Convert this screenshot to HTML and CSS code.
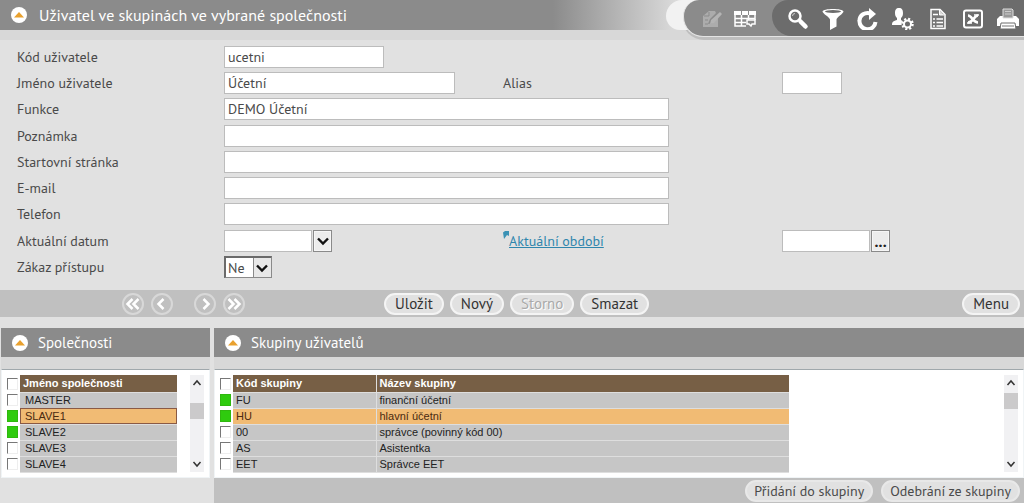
FILE: index.html
```html
<!DOCTYPE html>
<html lang="cs">
<head>
<meta charset="utf-8">
<title>Uživatel ve skupinách ve vybrané společnosti</title>
<link rel="stylesheet" href="styles.css">
</head>
<body>
<svg class="defs" aria-hidden="true">
  <symbol id="collapse" viewBox="0 0 16 16"><circle cx="8" cy="8" r="8" fill="#fff"/><path d="M3 10.500 8 5l5 5.500z" fill="#e9a12f"/></symbol>
  <symbol id="chev" viewBox="0 0 14 14"><path d="m2 4.500 5 5 5-5" fill="none" stroke="#111" stroke-width="2.400"/></symbol>
</svg>

<header class="page-head">
  <button class="toggle" aria-label="Sbalit formulář"><svg><use href="#collapse"/></svg></button>
  <h1 class="title">Uživatel ve skupinách ve vybrané společnosti</h1>
  <nav class="tools" aria-label="Nástroje">
    <div class="tools-bar">
      <div class="tools-minor">
        <button class="tool" aria-label="Upravit" disabled><svg viewBox="0 0 22 22"><path d="M2 8l6-5h6l1 2-6 6-2 5 5-1 5-5v9H2z" fill="#acacac"/><path d="M10 12l9-8 2 2-8 9-4 1z" fill="#b4b4b4"/><path d="M3 8h5V4M4 12h3M4 16h3" fill="none" stroke="#8b8b8b" stroke-width="1"/></svg></button>
        <button class="tool" aria-label="Tabulka"><svg viewBox="0 0 22 22"><path d="M0 3h22v4H0z" fill="#fff"/><path d="M7.500 3v4M14.500 3v4" stroke="#8b8b8b"/><path d="M1 7v11h11M1 10.500h20M1 14.500h11M7.500 7v11M14.500 7v5M21 7v5" fill="none" stroke="#fff" stroke-width="1.500"/><path d="M13 12h8v4h-3l-1 2-2-2h-2z" fill="#8b8b8b" stroke="#fff" stroke-width="1.500"/></svg></button>
      </div>
      <div class="tools-main">
        <button class="tool" aria-label="Hledat"><svg viewBox="0 0 22 22"><circle cx="8" cy="8" r="5.500" fill="none" stroke="#fff" stroke-width="2.500"/><path d="M5.500 8A2.500 2.500 0 0 1 8 5.500" fill="none" stroke="#ccc"/><path d="m13.500 13.500 5 5" stroke="#fff" stroke-width="4.500" stroke-linecap="round"/></svg></button>
        <button class="tool" aria-label="Filtr"><svg viewBox="0 0 22 22"><path d="M.5 3.500C.5 0 21.500 0 21.500 3.500c0 2-7 6-7 8v7L8 22v-10.500c0-2-7.500-6-7.500-8z" fill="#fff"/><ellipse cx="11" cy="3.500" rx="8" ry="1.500" fill="#6c6c6c"/></svg></button>
        <button class="tool" aria-label="Obnovit"><svg viewBox="0 0 22 22"><path d="M14 5.500C8 3.500 2.500 7 2.500 12.500a8 8 0 0 0 16 1.500" fill="none" stroke="#fff" stroke-width="4"/><path d="M12 0l7 6-7 6z" fill="#fff"/></svg></button>
        <button class="tool" aria-label="Nastavení uživatele"><svg viewBox="0 0 22 22"><path d="M7 0c3 0 4 2 4 5S10 9 9 10v2l3 2-1 3H0c0-4 2-4 5-5v-2C4 9 3 8 3 5s1-5 4-5z" fill="#fff"/><circle cx="15.500" cy="16" r="6" fill="#6c6c6c"/><circle cx="15.500" cy="16" r="3.500" fill="none" stroke="#fff" stroke-width="2"/><circle cx="15.500" cy="16" r="5" fill="none" stroke="#fff" stroke-width="2.500" stroke-dasharray="2 1.927"/></svg></button>
        <button class="tool" aria-label="Sestava"><svg viewBox="0 0 22 22"><path d="M4 1.500h9l5 5V20.500H4z" fill="#777" stroke="#fff" stroke-width="1.500"/><path d="M12.500 2v5H17" fill="#ddd" stroke="#fff"/><path d="M6 11h2M9.500 11H16M6 14.500h2M9.500 14.500H16M6 18h2M9.500 18H16M6 6.500h5" stroke="#fff" stroke-width="1.500"/></svg></button>
        <button class="tool" aria-label="Export do Excelu"><svg viewBox="0 0 22 22"><rect x="2" y="2.500" width="18" height="17" rx="2" fill="none" stroke="#fff" stroke-width="2"/><path d="M6 7.500c4 0 5 7 10 7M16 7.500c-4 0-5 7-10 7" fill="none" stroke="#fff" stroke-width="2.600"/><path d="M5 15h5M12 7h5" stroke="#fff" stroke-width="1.500"/></svg></button>
        <button class="tool" aria-label="Tisk"><svg viewBox="0 0 22 22"><path d="M0 11l3-3h16l3 3v7H0z" fill="#fff"/><path d="M6 1h9l1 1v8H6z" fill="#999" stroke="#ddd"/><path d="M8 3.500h6M8 6h6" stroke="#ccc"/><path d="M4 15h14l1 6H3z" fill="#fff" stroke="#6c6c6c"/><path d="M5 18h12" stroke="#777"/></svg></button>
      </div>
    </div>
  </nav>
</header>

<form class="form">
  <div class="group">
    <div class="row"><label for="kod">Kód uživatele</label><input id="kod" class="field w-s" value="ucetni"></div>
    <div class="row"><label for="jmeno">Jméno uživatele</label><input id="jmeno" class="field w-m" value="Účetní"><label for="alias">Alias</label><input id="alias" class="field w-xs"></div>
    <div class="row"><label for="funkce">Funkce</label><input id="funkce" class="field w-l" value="DEMO Účetní"></div>
  </div>
  <div class="group">
    <div class="row"><label for="pozn">Poznámka</label><input id="pozn" class="field w-l"></div>
    <div class="row"><label for="start">Startovní stránka</label><input id="start" class="field w-l"></div>
    <div class="row"><label for="mail">E-mail</label><input id="mail" class="field w-l" type="email"></div>
    <div class="row"><label for="tel">Telefon</label><input id="tel" class="field w-l" type="tel"></div>
  </div>
  <div class="group">
    <div class="row">
      <label for="datum">Aktuální datum</label>
      <div class="combo"><input id="datum" class="field w-d"><button type="button" class="box-btn" aria-label="Vybrat datum"><svg><use href="#chev"/></svg></button></div>
      <div class="link-cell"><svg class="mark" viewBox="0 0 6 8"><path d="M0 1.500 2 0h4v5L4 4 1 8z" fill="#3b92b5"/></svg><a class="link" id="obdobi-link" href="#obdobi">Aktuální období</a></div>
      <div class="combo"><input id="obdobi" class="field w-d" aria-labelledby="obdobi-link"><button type="button" class="box-btn dots" aria-label="Vybrat období">...</button></div>
    </div>
    <div class="row"><label for="zakaz">Zákaz přístupu</label>
      <div class="select-box"><select id="zakaz" class="select"><option>Ne</option><option>Ano</option></select><span class="select-arrow"><svg><use href="#chev"/></svg></span></div>
    </div>
  </div>
</form>

<div class="actions">
  <div class="pager">
    <button class="nav-btn" aria-label="První"><svg viewBox="0 0 22 22"><circle cx="11" cy="11" r="10"/><path d="m10.500 6-5 5 5 5M16.500 6l-5 5 5 5"/></svg></button>
    <button class="nav-btn" aria-label="Předchozí"><svg viewBox="0 0 22 22"><circle cx="11" cy="11" r="10"/><path d="m12.500 6-5 5 5 5"/></svg></button>
    <button class="nav-btn next" aria-label="Další"><svg viewBox="0 0 22 22"><circle cx="11" cy="11" r="10"/><path d="m9.500 6 5 5-5 5"/></svg></button>
    <button class="nav-btn" aria-label="Poslední"><svg viewBox="0 0 22 22"><circle cx="11" cy="11" r="10"/><path d="m5.500 6 5 5-5 5M11.500 6l5 5-5 5"/></svg></button>
  </div>
  <div class="commands">
    <button class="pill">Uložit</button>
    <button class="pill">Nový</button>
    <button class="pill" disabled>Storno</button>
    <button class="pill">Smazat</button>
  </div>
  <button class="pill menu">Menu</button>
</div>

<main class="panels">
  <section class="panel">
    <header class="panel-head"><button class="toggle" aria-label="Sbalit společnosti"><svg><use href="#collapse"/></svg></button><h2 class="title">Společnosti</h2></header>
    <div class="list">
      <table class="grid companies">
        <thead><tr><td class="check"><input type="checkbox" aria-label="Vše"></td><th>Jméno společnosti</th></tr></thead>
        <tbody>
          <tr><td class="check"><input type="checkbox" aria-label="MASTER"></td><td>MASTER</td></tr>
          <tr class="current"><td class="check"><input type="checkbox" checked aria-label="SLAVE1"></td><td>SLAVE1</td></tr>
          <tr><td class="check"><input type="checkbox" checked aria-label="SLAVE2"></td><td>SLAVE2</td></tr>
          <tr><td class="check"><input type="checkbox" aria-label="SLAVE3"></td><td>SLAVE3</td></tr>
          <tr><td class="check"><input type="checkbox" aria-label="SLAVE4"></td><td>SLAVE4</td></tr>
        </tbody>
      </table>
      <div class="scroll" aria-hidden="true"><svg viewBox="0 0 14 14"><path d="m3.500 9 3.500-4 3.500 4"/></svg><span class="thumb low"></span><svg class="down" viewBox="0 0 14 14"><path d="m3.500 5 3.500 4 3.500-4"/></svg></div>
    </div>
  </section>
  <section class="panel">
    <header class="panel-head"><button class="toggle" aria-label="Sbalit skupiny"><svg><use href="#collapse"/></svg></button><h2 class="title">Skupiny uživatelů</h2></header>
    <div class="list">
      <table class="grid groups">
        <thead><tr><td class="check"><input type="checkbox" aria-label="Vše"></td><th class="code">Kód skupiny</th><th>Název skupiny</th></tr></thead>
        <tbody>
          <tr><td class="check"><input type="checkbox" checked aria-label="FU"></td><td>FU</td><td>finanční účetní</td></tr>
          <tr class="current"><td class="check"><input type="checkbox" checked aria-label="HU"></td><td>HU</td><td>hlavní účetní</td></tr>
          <tr><td class="check"><input type="checkbox" aria-label="00"></td><td>00</td><td>správce (povinný kód 00)</td></tr>
          <tr><td class="check"><input type="checkbox" aria-label="AS"></td><td>AS</td><td>Asistentka</td></tr>
          <tr><td class="check"><input type="checkbox" aria-label="EET"></td><td>EET</td><td>Správce EET</td></tr>
        </tbody>
      </table>
      <div class="scroll" aria-hidden="true"><svg viewBox="0 0 14 14"><path d="m3.500 9 3.500-4 3.500 4"/></svg><span class="thumb"></span><svg class="down" viewBox="0 0 14 14"><path d="m3.500 5 3.500 4 3.500-4"/></svg></div>
    </div>
    <footer class="panel-foot"><button class="pill soft">Přidání do skupiny</button><button class="pill soft">Odebrání ze skupiny</button></footer>
  </section>
</main>
</body>
</html>
```
FILE: styles.css
```css
* { box-sizing: border-box; }
body {
  margin: 0;
  min-height: 100vh;
  display: flex;
  flex-direction: column;
  background: #e1e1e1;
  color: #4a4a4a;
  font: 14px/22px "PT Sans", "Noto Sans", sans-serif;
}
button, input, select { font: inherit; color: inherit; margin: 0; padding: 0; border: 0; }
button { background: none; }
.defs { position: absolute; width: 0; height: 0; }

.page-head {
  position: relative;
  display: flex;
  align-items: center;
  gap: 12px;
  height: 40px;
  padding: 0 11px 10px;
  background:
    linear-gradient(#d8d8d8, #d8d8d8) 0 30px / 100% 10px no-repeat,
    linear-gradient(90deg, #8b8b8b 54%, #e1e1e1 67%);
}
.toggle { display: flex; width: 16px; height: 16px; }
.toggle svg { width: 16px; height: 16px; }
.title { margin: 0; color: #fff; font-size: 16px; font-weight: 400; line-height: 28px; }

.tools {
  position: absolute;
  top: 0;
  right: 0;
  height: 40px;
  width: 342px;
  background: linear-gradient(transparent 30px, #bebebe 30px);
  border-bottom-left-radius: 22px;
}
.tools::before {
  content: "";
  position: absolute;
  top: 0;
  left: -16px;
  width: 60px;
  height: 30px;
  background: #f2f2f2;
  border-radius: 16px 0 0 14px;
}
.tools-bar {
  position: relative;
  display: flex;
  height: 37px;
  margin-left: 1px;
  background: #8b8b8b;
  border-bottom: 1px solid #e4e4e4;
  border-left: 1px solid #e4e4e4;
  border-radius: 16px 0 0 20px;
}
.tools-minor { display: flex; align-items: center; gap: 11px; padding: 2px 0 0 17px; width: 88px; }
.tools-main {
  flex: 1;
  display: flex;
  align-items: center;
  justify-content: space-between;
  padding: 2px 5px 0 15px;
  background: #6c6c6c;
  border-radius: 16px 0 0 20px;
}
.tool { display: flex; width: 22px; height: 22px; }
.tool svg { width: 22px; height: 22px; }

.form { display: flex; flex-direction: column; gap: 5px; padding: 6px 0 12px 17px; }
.group { display: flex; flex-direction: column; gap: 4px; }
.row {
  display: grid;
  grid-template-columns: minmax(0, 207fr) minmax(0, 279fr) minmax(0, 279fr) minmax(0, 242fr);
  height: 22px;
}
.field {
  height: 22px;
  padding: 0 3px;
  background: #fff;
  border: 1px solid #bcbcbc;
  outline: 0;
}
.w-xs { width: 60px; }
.w-s { width: 160px; }
.w-m { width: 231px; }
.w-l { width: 445px; }
.w-d { width: 88px; }
.combo { display: flex; gap: 1px; }
.box-btn {
  display: flex;
  align-items: center;
  justify-content: center;
  width: 19px;
  height: 22px;
  background: #ececec;
  border: 1px solid #8a8a8a;
  box-shadow: inset 0 0 0 1px #f6f6f6;
}
.box-btn svg, .select-arrow svg { width: 14px; height: 14px; }
.dots { font-size: 16px; font-weight: 700; color: #222; }
.link-cell { display: flex; align-items: flex-start; }
.mark { width: 6px; height: 8px; margin-top: 1px; }
.link { color: #2f86ad; }
.select-box { position: relative; display: flex; width: 48px; border: 1px solid #8a8a8a; border-top: 2px solid #6a6a6a; border-left: 2px solid #6a6a6a; background: #fff; }
.select { width: 100%; padding-left: 2px; background: none; appearance: none; line-height: 18px; outline: 0; }
.select-arrow {
  position: absolute;
  right: 0;
  top: 0;
  bottom: 0;
  display: flex;
  align-items: center;
  width: 18px;
  padding-left: 1px;
  background: #e8e8e8;
  border-left: 1px solid #8a8a8a;
  pointer-events: none;
}

.actions {
  display: flex;
  align-items: center;
  height: 27px;
  margin-bottom: 11px;
  padding: 0 4px 0 122px;
  background: #c0c0c0;
}
.pager { display: flex; gap: 7px; width: 262px; }
.nav-btn { display: flex; width: 22px; height: 22px; }
.nav-btn.next { margin-left: 14px; }
.nav-btn svg { width: 22px; height: 22px; fill: none; }
.nav-btn circle { stroke: #d8d8d8; stroke-width: 2; }
.nav-btn path { stroke: #fff; stroke-width: 2.5; }
.commands { display: flex; gap: 6px; }
.pill {
  height: 22px;
  padding: 0 9px;
  background: #e1e1e1;
  border: 2px solid #f4f4f4;
  border-radius: 11px;
  color: #333;
  font-size: 15px;
  line-height: 16px;
}
.pill:disabled { color: #aaa; text-shadow: 1px 1px 0 #fff; }
.pill.soft { padding: 0 7px; border-color: #e8e8e8; color: #4a4a4a; font-size: 14px; }
.menu { margin-left: auto; }

.panels { flex: 1; display: grid; grid-template-columns: 209fr 810fr; gap: 4px; padding-left: 1px; }
.panel { display: flex; flex-direction: column; }
.panel-head {
  display: flex;
  align-items: center;
  gap: 10px;
  height: 41px;
  padding: 0 11px 12px;
  background: linear-gradient(#8b8b8b 29px, #d8d8d8 29px);
}
.panel-head .title { font-size: 15px; }
.list {
  display: flex;
  justify-content: space-between;
  height: 109px;
  padding: 5px;
  background: #fff;
  border: 1px solid #f0f4f6;
  border-top-color: #a0a8ac;
}
.grid { border-collapse: collapse; table-layout: fixed; font: 11px/15px "Liberation Sans", Arial, sans-serif; color: #222; align-self: flex-start; }
.companies { width: 170px; }
.groups { width: 569px; }
.grid tr { height: 16px; }
.grid thead tr { height: 17px; }
.grid td, .grid th { padding: 0 0 0 5px; text-align: left; background: #c6c6c6; border-bottom: 1px solid #dedede; line-height: 15px; }
.grid th { padding-left: 3px; background: #775f45; color: #fff; }
.groups .code { width: 143px; }
.groups tr > :nth-child(3) { border-left: 1px solid #dedede; padding-left: 3px; }
.groups tr > :nth-child(2) { padding-left: 3px; }
.grid .current td { background: #f1bb74; color: #4a2a10; }
.companies .current td:last-child { outline: 1px solid #8a5a44; outline-offset: -1px; }
.grid tr .check { width: 13px; padding: 0; background: #fff; border: 0; }
.check input {
  display: block;
  appearance: none;
  width: 11px;
  height: 12px;
  border: 1px solid #eee;
  border-top-color: #777;
  border-left-color: #777;
}
.check input:checked { background: #2fcb0e; border-color: #2fb80e; }
.scroll { display: flex; flex-direction: column; width: 14px; background: #f1f1f3; }
.scroll svg { width: 14px; height: 16px; fill: none; stroke: #333; stroke-width: 1.5; }
.thumb { height: 16px; margin-top: 2px; background: #cbcacb; }
.thumb.low { margin-top: 12px; }
.down { margin-top: auto; }
.panel-foot { flex: 1; display: flex; justify-content: flex-end; align-items: flex-start; gap: 8px; padding: 2px 4px 1px; background: #c0c0c0; }
```
